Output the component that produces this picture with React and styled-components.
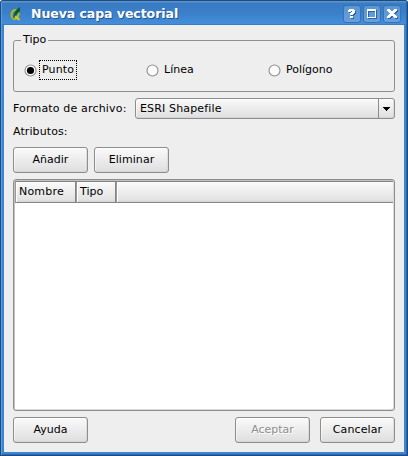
import React from "react";
import styled, { createGlobalStyle } from "styled-components";

const GlobalStyle = createGlobalStyle`
  * { box-sizing: border-box; }
  html, body { margin: 0; padding: 0; overflow: hidden; background: #fff; }
  body, button { font-family: "DejaVu Sans", sans-serif; font-size: 11px; color: #000; }
`;

const Window = styled.div`
  width: 408px;
  height: 456px;
  display: flex;
  flex-direction: column;
  border: 1px solid #1c4d80;
  border-top-color: #23496f;
  border-radius: 3px 3px 0 0;
  background: #3d85d0;
  box-shadow: inset 1px 1px 0 #5b9ce0, inset -1px -1px 0 #2a68ab;
`;

const TitleBar = styled.header`
  height: 24px;
  flex: none;
  display: flex;
  align-items: center;
  margin: 0 1px;
  padding: 1px 5px 0 7px;
  background: linear-gradient(#5594d8 0 1px, #3a7bc2 2px, #3a80c9 12px, #438edc 23px, #306ba8 24px);
`;

const Title = styled.h1`
  flex: 1;
  margin: 0 0 0 8px;
  font-size: 12.5px;
  line-height: 16px;
  font-weight: bold;
  letter-spacing: -0.05px;
  color: #fff;
  text-shadow: 1px 1px 0 #26568a;
  white-space: nowrap;
`;

const TitleButtons = styled.div`
  display: flex;
  gap: 2px;
`;

const TitleButton = styled.button`
  width: 18px;
  height: 18px;
  padding: 0;
  display: flex;
  border: 1px solid #3573b4;
  border-radius: 3px;
  background: linear-gradient(#5b95d2, #659fe0);
  svg { display: block; width: 16px; height: 16px; }
`;

const Content = styled.main`
  flex: 1;
  min-height: 0;
  margin: 0 3px 3px;
  padding: 9px 9px 9px;
  display: flex;
  flex-direction: column;
  background: #eeeeee;
`;

const Group = styled.fieldset`
  height: 58px;
  flex: none;
  margin: 0;
  min-width: 0;
  padding: 0;
  display: flex;
  border: 1px solid #8f8f8f;
  border-radius: 3px;
`;

const Legend = styled.legend`
  height: 12px;
  line-height: 12px;
  margin-left: 7px;
  padding: 0 2px;
`;

const RadioRow = styled.div`
  display: grid;
  grid-template-columns: 122px 122px 1fr;
  padding: 14px 0 0 10px;
`;

const Radio = styled.label`
  display: flex;
  align-items: center;
  height: 20px;
  svg { flex: none; width: 13px; height: 13px; margin-top: 1px; }
`;

const RadioText = styled.span`
  height: 20px;
  line-height: 18px;
  margin-left: 2px;
  padding: 0 2px;
  border: 1px dotted ${(p) => (p.$focused ? "#000" : "transparent")};
`;

const Text = styled.span`
  letter-spacing: ${(p) => p.$spacing || 0}px;
  white-space: nowrap;
`;

const FormatRow = styled.div`
  display: flex;
  align-items: center;
  height: 21px;
  margin-top: 6px;
  flex: none;
`;

const FormatLabel = styled.div`
  width: 122px;
`;

const raised = `
  border: 1px solid #8d8d8d;
  border-radius: 3px;
  background: linear-gradient(#fafafa, #dedede);
  box-shadow: inset 1px 1px 0 #fff8, inset -1px -1px 0 #cfcfcf88;
`;

const Combo = styled.div`
  ${raised}
  flex: 1;
  height: 21px;
  display: flex;
  line-height: 19px;
  padding-left: 4px;
`;

const ComboValue = styled.div`
  flex: 1;
`;

const ComboArrow = styled.div`
  width: 16px;
  display: flex;
  align-items: center;
  justify-content: center;
  border-left: 1px solid #8d8d8d;
  svg { width: 7px; height: 4px; margin-top: 1px; }
`;

const SectionLabel = styled.div`
  height: 14px;
  line-height: 14px;
  margin-top: 6px;
  flex: none;
`;

const ButtonRow = styled.div`
  display: flex;
  flex: none;
  gap: ${(p) => p.$gap}px;
  margin-top: ${(p) => p.$top}px;
`;

const Spacer = styled.div`
  flex: 1;
`;

const Button = styled.button`
  ${raised}
  width: 75px;
  height: 26px;
  padding: 0;
  line-height: 14px;
  color: ${(p) => (p.disabled ? "#8e8e8e" : "#000")};
  text-shadow: ${(p) => (p.disabled ? "1px 1px 0 #fff" : "none")};
`;

const Table = styled.div`
  flex: none;
  height: 232px;
  margin-top: 6px;
  padding: 0 1px 1px;
  border: 1px solid #8d8d8d;
  border-radius: 3px;
  background: #fff;
  box-shadow: inset 1px 1px 0 #c2c2c2, inset -1px -1px 0 #dadada;
`;

const TableHeader = styled.div`
  height: 22px;
  margin-top: 1px;
  display: grid;
  grid-template-columns: 61px 40px 1fr;
  border-top: 1px solid #858585;
  border-bottom: 1px solid #858585;
  background: linear-gradient(#fafafa, #e3e3e3 18px, #d2d2d2);
`;

const HeaderCell = styled.div`
  line-height: 19px;
  padding-left: 3px;
  border-left: 1px solid #999;
  border-right: 1px solid ${(p) => (p.$last ? "transparent" : "#858585")};
  box-shadow: inset 1px 0 0 #fff;
`;

function QgisLogo() {
  return (
    <svg width="14" height="16" viewBox="0 0 14 16">
      <ellipse cx="6" cy="8.500" rx="3.500" ry="4.500" fill="none" stroke="#b5b918" strokeWidth="2" transform="rotate(12 6 8.500)" />
      <path d="M6 10l4.500 4" stroke="#d0cc20" strokeWidth="2" />
      <path d="M4 13l1.500-6L7 4l4-3v4L9 7l-3 3z" fill="#075c2c" />
    </svg>
  );
}

function RadioMark({ checked }) {
  return (
    <svg viewBox="0 0 13 13">
      <circle cx="6.500" cy="6.500" r="5.500" fill="#fcfcfc" stroke="#8e8e8e" strokeWidth="1.100" />
      {checked && <circle cx="6.500" cy="6.500" r="3.600" fill="#000" />}
    </svg>
  );
}

const glyphs = {
  help: "M4 4h1V3h5v1h1v3h-1v1H9v1H6V7h1V6h1V5H7v1H4zM6 10h3v2H6z",
  maximize: "M3 3h9v9H3zM4 5v6h7V5z",
  close: "M3 3h3v1h1v1h2V4h1V3h3v2h-1v1h-1v1h-1v1h1v1h1v1h1v2h-3v-1H9v-1H7v1H6v1H3v-2h1V9h1V8h1V7H5V6H4V5H3z",
};

function Glyph({ name }) {
  return (
    <svg viewBox="0 0 16 16" shapeRendering="crispEdges" fillRule="evenodd">
      <path d={glyphs[name]} fill="#2d649e" transform="translate(1 1)" />
      <path d={glyphs[name]} fill="#fff" />
    </svg>
  );
}

const options = [
  { label: "Punto", checked: true },
  { label: "Línea" },
  { label: "Polígono" },
];

export default function App() {
  return (
    <>
      <GlobalStyle />
      <Window>
        <TitleBar>
          <QgisLogo />
          <Title>Nueva capa vectorial</Title>
          <TitleButtons>
            {["help", "maximize", "close"].map((name) => (
              <TitleButton key={name} aria-label={name}>
                <Glyph name={name} />
              </TitleButton>
            ))}
          </TitleButtons>
        </TitleBar>
        <Content>
          <Group>
            <Legend><Text>Tipo</Text></Legend>
            <RadioRow>
              {options.map(({ label, checked }) => (
                <Radio key={label}>
                  <RadioMark checked={checked} />
                  <RadioText $focused={checked}><Text $spacing={checked ? 0.15 : 0}>{label}</Text></RadioText>
                </Radio>
              ))}
            </RadioRow>
          </Group>
          <FormatRow>
            <FormatLabel><Text $spacing={0.17}>Formato de archivo:</Text></FormatLabel>
            <Combo>
              <ComboValue><Text $spacing={0.15}>ESRI Shapefile</Text></ComboValue>
              <ComboArrow>
                <svg viewBox="0 0 7 4" shapeRendering="crispEdges">
                  <path d="M0 0h7v1H6v1H5v1H4v1H3V3H2V2H1V1H0z" />
                </svg>
              </ComboArrow>
            </Combo>
          </FormatRow>
          <SectionLabel><Text $spacing={0.1}>Atributos:</Text></SectionLabel>
          <ButtonRow $gap={6} $top={8}>
            <Button><Text>Añadir</Text></Button>
            <Button><Text $spacing={0.08}>Eliminar</Text></Button>
          </ButtonRow>
          <Table>
            <TableHeader>
              <HeaderCell><Text $spacing={0.2}>Nombre</Text></HeaderCell>
              <HeaderCell><Text>Tipo</Text></HeaderCell>
              <HeaderCell $last />
            </TableHeader>
          </Table>
          <ButtonRow $gap={10} $top={6}>
            <Button><Text>Ayuda</Text></Button>
            <Spacer />
            <Button disabled><Text>Aceptar</Text></Button>
            <Button><Text $spacing={0.12}>Cancelar</Text></Button>
          </ButtonRow>
        </Content>
      </Window>
    </>
  );
}
